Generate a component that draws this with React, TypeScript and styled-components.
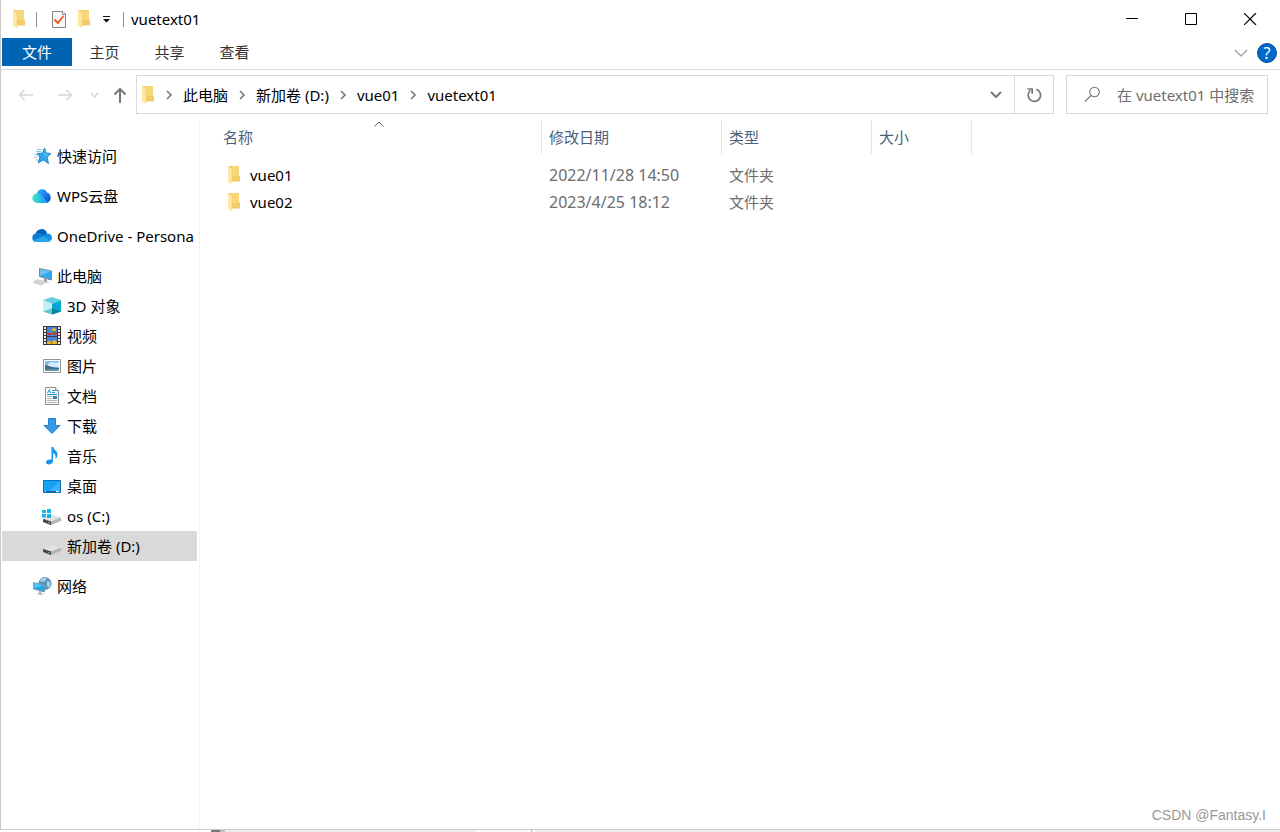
import React from 'react';
import styled, { createGlobalStyle } from 'styled-components';

const GlobalStyle = createGlobalStyle`
  * { box-sizing: border-box; }
  body {
    margin: 0;
    background: #fff;
    color: #000;
    font-family: "Noto Sans", "Noto Sans CJK SC", sans-serif;
    font-size: 15px;
    line-height: 20px;
  }
  button, input {
    margin: 0;
    padding: 0;
    border: 0;
    background: none;
    color: inherit;
    font: inherit;
  }
  svg { display: block; flex: none; }
`;

const Page = styled.div`
  display: flex;
  flex-direction: column;
  min-height: 100vh;
`;

const Window = styled.div`
  flex: 1;
  display: flex;
  flex-direction: column;
  border-left: 1px solid #c9c9c9;
  border-bottom: 1px solid #c9c9c9;
`;

const TitleBar = styled.header`
  display: flex;
  align-items: center;
  height: 38px;
  padding-left: 11px;
`;

const QuickTools = styled.div`
  display: flex;
  align-items: center;
`;

const ToolButton = styled.button<{ $width: number }>`
  display: flex;
  align-items: center;
  justify-content: center;
  width: ${p => p.$width}px;
  height: 24px;
`;

const Divider = styled.span<{ $before: number; $after: number }>`
  width: 1px;
  height: 15px;
  margin: 0 ${p => p.$after}px 0 ${p => p.$before}px;
  background: #8f8f8f;
`;

const Title = styled.h1`
  flex: 1;
  margin: 0;
  font-size: 15px;
  font-weight: 400;
`;

const WindowButton = styled.button`
  display: flex;
  align-items: center;
  justify-content: center;
  width: 59px;
  height: 38px;
`;

const Ribbon = styled.nav`
  display: flex;
  height: 32px;
  padding-left: 1px;
  border-bottom: 1px solid #dadbdc;
`;

const RibbonTab = styled.button<{ $primary?: boolean }>`
  width: ${p => (p.$primary ? 70 : 65)}px;
  height: 28px;
  background: ${p => (p.$primary ? '#0063b1' : 'transparent')};
  color: ${p => (p.$primary ? '#fff' : '#333')};
`;

const RibbonEnd = styled.div`
  display: flex;
  align-items: center;
  gap: 9px;
  height: 30px;
  margin-left: auto;
  padding-right: 3px;
`;

const HelpButton = styled.button`
  width: 20px;
  height: 20px;
  border: 1px solid #0a4f94;
  border-radius: 50%;
  background: #0067cb;
  color: #fff;
  font-size: 16px;
  line-height: 18px;
`;

const AddressRow = styled.div`
  display: flex;
  align-items: center;
  height: 49px;
  padding-right: 12px;
`;

const NavButtons = styled.div`
  display: flex;
  width: 135px;
  padding-left: 5px;
`;

const AddressBox = styled.div`
  flex: 1;
  display: flex;
  align-items: center;
  min-width: 0;
  height: 39px;
  border: 1px solid #d9d9d9;
`;

const Crumbs = styled.ol`
  flex: 1;
  display: flex;
  align-items: center;
  margin: 0;
  padding: 0;
  list-style: none;
`;

const CrumbRoot = styled.span`
  padding-left: 4px;
`;

const Crumb = styled.li`
  display: flex;
  align-items: center;
  gap: 10px;
  padding-left: 10px;
  white-space: nowrap;
`;

const PlainLink = styled.a`
  color: inherit;
  text-decoration: none;
`;

const RefreshButton = styled.button`
  display: flex;
  align-items: center;
  justify-content: center;
  width: 39px;
  height: 37px;
  border-left: 1px solid #d9d9d9;
`;

const SearchBox = styled.label`
  display: flex;
  align-items: center;
  gap: 16px;
  width: 202px;
  height: 39px;
  margin-left: 12px;
  padding-left: 17px;
  border: 1px solid #d9d9d9;
`;

const SearchInput = styled.input`
  flex: 1;
  min-width: 0;
  height: 36px;
  outline: none;
  &::placeholder { color: #6d6d6d; opacity: 1; }
`;

const Body = styled.div`
  flex: 1;
  display: flex;
  padding-top: 1px;
`;

const Sidebar = styled.aside`
  width: 199px;
  padding: 21px 2px 0 1px;
  border-right: 1px solid #f3f3f3;
`;

const SideGroup = styled.ul`
  margin: 0 0 10px;
  padding: 0;
  list-style: none;
`;

const SideLink = styled.a<{ $child?: boolean; $selected?: boolean }>`
  display: flex;
  align-items: center;
  gap: 5px;
  height: 30px;
  padding-left: ${p => (p.$child ? 40 : 30)}px;
  overflow: hidden;
  white-space: nowrap;
  color: inherit;
  text-decoration: none;
  background: ${p => (p.$selected ? '#d9d9d9' : 'transparent')};
`;

const Files = styled.main`
  flex: 1;
  padding-left: 16px;
`;

const FileTable = styled.table`
  table-layout: fixed;
  width: 756px;
  border-collapse: separate;
  border-spacing: 0;
  tbody::before { content: ''; display: block; height: 7px; }
`;

const HeadCell = styled.th<{ $width: number }>`
  position: relative;
  width: ${p => p.$width}px;
  height: 34px;
  padding: 0 0 0 7px;
  border-right: 1px solid #e5e5e5;
  color: #4c607a;
  font-weight: 400;
  text-align: left;
`;

const SortMark = styled.span`
  position: absolute;
  top: 1px;
  left: 50%;
  transform: translateX(-50%);
`;

const Cell = styled.td`
  height: 27px;
  padding: 0 0 0 7px;
  color: #6d6d6d;
`;

const DateCell = styled(Cell)`
  font-size: 16px;
`;

const FileName = styled(PlainLink)`
  display: flex;
  align-items: center;
  gap: 9px;
  padding-left: 4px;
  color: #000;
`;

const BottomStrip = styled.footer`
  display: flex;
  height: 2px;
  padding-left: 211px;
  background: #fff;
`;

const StripPart = styled.span<{ $color: string; $width?: number }>`
  flex: ${p => (p.$width ? `0 0 ${p.$width}px` : '1')};
  background: ${p => p.$color};
`;

const Watermark = styled.span`
  position: absolute;
  right: 14px;
  bottom: 7px;
  color: #999;
  font-family: "Liberation Sans", sans-serif;
  font-size: 14px;
`;

const FolderIcon = () => (
  <svg width="14" height="18" viewBox="0 0 14 18">
    <path d="M1 0h11v9l1 1v5.500H4z" fill="#f2cc69" />
    <path d="M5 0h7v10H5z" fill="#f7d67c" />
    <path d="M1 0l4 3v15l-4-2z" fill="#ffe9a2" />
    <path d="M5 2.500V17" stroke="#efc968" strokeWidth=".5" />
  </svg>
);

const CheckDocIcon = () => (
  <svg width="16" height="19" viewBox="0 0 16 19">
    <path d="M1.500 1.500h10.500l2.500 2.500v13.500h-13z" fill="#f7f8fa" stroke="#858585" />
    <path d="M11.500 1.500v3h3" fill="#fff" stroke="#858585" />
    <path d="M3.500 9.500l3.300 3.500 5.700-7" fill="none" stroke="#ee5a1c" strokeWidth="1.900" />
  </svg>
);

const CustomizeIcon = () => (
  <svg width="7" height="7" viewBox="0 0 7 7">
    <path d="M0 0h7v1H0zM0 3h7L3.500 6.500z" fill="#111" />
  </svg>
);

type ChevronProps = { size?: number; height?: number; color?: string; width?: number };

const Chevron = ({ size = 12, height = 7, color = '#777', width = 1.5 }: ChevronProps) => (
  <svg width={size} height={height} viewBox={`0 0 ${size} ${height}`} fill="none" stroke={color} strokeWidth={width}>
    <path d={`M1 1L${size / 2} ${height - 1}L${size - 1} 1`} />
  </svg>
);

const CrumbArrow = () => (
  <svg width="8" height="10" viewBox="0 0 8 10" fill="none" stroke="#777" strokeWidth="1.600">
    <path d="M2 1l4 4-4 4" />
  </svg>
);

const ArrowIcon = ({ kind }: { kind: 'back' | 'forward' | 'up' }) => (
  <svg width="16" height="18" viewBox="0 0 16 18" fill="none" stroke={kind === 'up' ? '#777' : '#d6d6d6'} strokeWidth={kind === 'up' ? 2 : 1.5}>
    {kind === 'back' && <path d="M15 9H1.500M6.500 4L1.500 9l5 5" />}
    {kind === 'forward' && <path d="M1 9h13.500M9.500 4l5 5-5 5" />}
    {kind === 'up' && <path d="M8 17V3M2.500 8.500L8 3l5.500 5.500" />}
  </svg>
);

const RefreshIcon = () => (
  <svg width="16" height="16" viewBox="0 0 16 16" fill="none" stroke="#777" strokeWidth="1.700">
    <path d="M10.300 2.300A6.200 6.200 0 1 1 4.500 3.300" />
    <path d="M1.500 2h4.700v4.700" />
  </svg>
);

const SearchIcon = () => (
  <svg width="17" height="17" viewBox="0 0 17 17" fill="none" stroke="#777" strokeWidth="1.100">
    <circle cx="10.500" cy="6" r="4.800" />
    <path d="M7 9.500L1 15.500" />
  </svg>
);

type IconName = 'star' | 'wps' | 'onedrive' | 'pc' | 'cube' | 'video' | 'picture' | 'doc' | 'download' | 'music' | 'desktop' | 'os' | 'drive' | 'network';

const Drive = () => (
  <>
    <path d="M1 13l9-3.500 9 2.500v3l-10 4-8-3z" fill="#b5b5b5" />
    <path d="M1 12.500l9-3.500 9 2.500-10 4z" fill="#e2e2e2" />
    <path d="M1 13l8 2.500V19l-8-3z" fill="#454545" />
    <path d="M6 16l2 .6v1L6 17z" fill="#56d64d" />
  </>
);

const drawings: Record<IconName, React.ReactNode> = {
  star: (
    <>
      <path d="M12.500 2l1.500 5 5 .5-4 3.600 1.500 6.400-5-3.500-5.500 3 2-6L5 7.500l5.500-.5z" fill="#2fa6ea" stroke="#1f82c4" strokeWidth=".9" />
      <path d="M5 3.500h5M4 5.500h5M2.500 8.500h3M2 11h4M3 14h3" stroke="#79bde8" strokeWidth=".9" />
      <path d="M12.300 4l1.300 4.200 3.400.3-4.500 2.500z" fill="#5cc3f6" />
    </>
  ),
  wps: (
    <>
      <defs>
        <linearGradient id="wpsLeft" x1="0" x2="1"><stop stopColor="#42e8cb" /><stop offset="1" stopColor="#1590f5" /></linearGradient>
        <linearGradient id="wpsRight" x1="0" y1="0" x2="1" y2="1"><stop stopColor="#35b4ff" /><stop offset="1" stopColor="#0842d8" /></linearGradient>
      </defs>
      <path d="M5 8a5.200 5.200 0 0 1 10-1.500A5.500 5.500 0 0 1 14.500 17H7z" fill="url(#wpsRight)" />
      <path d="M5 7.500c4-1 5 2 7.500 5 1.500 2 2.500 3 3.500 4.500H5A4.700 4.700 0 0 1 5 7.500z" fill="url(#wpsLeft)" />
    </>
  ),
  onedrive: (
    <>
      <path d="M3.500 8a6 6 0 0 1 11.500-1l-3 5z" fill="#0364b8" />
      <path d="M4 7.500c3-1 5.500 0 7.500 1.500l4-1.500a5 5 0 0 1-.5 8.500H4A4.300 4.300 0 0 1 4 7.500z" fill="#0f78d4" />
      <path d="M11 10l4.500-2.500c2.500 0 4.500 2 4.500 4.300 0 1.200-.5 2.200-1.300 3z" fill="#1490df" />
      <path d="M1 14.500l10.500-4.500 7.200 5c-.7.700-1.500 1-2.500 1H4c-1.200 0-2.300-.6-3-1.500z" fill="#28a8ea" />
    </>
  ),
  pc: (
    <>
      <path d="M7.500 2.500l12 2.500v9l-12-3.500z" fill="#35a7ee" stroke="#7b8790" />
      <path d="M8 3l11 2.300L8 9.500z" fill="#68c3f5" />
      <path d="M12 12.500l3 1v2h-3z" fill="#8c969d" />
      <path d="M9 14.500l8 1.500-1 1-8-1.500z" fill="#b8bec3" />
      <path d="M5 13.500l9 2.500-4 3-9-2.500z" fill="#e1e4e6" stroke="#b7bbbf" strokeWidth=".6" />
      <path d="M4 14.800l8.500 2.400M3 16l8 2.300" stroke="#b2b7bb" strokeWidth=".5" />
    </>
  ),
  cube: (
    <>
      <path d="M1 4l9-3 9 3-9 4z" fill="#5fd0df" />
      <path d="M1 4l9 4v10.500L1 15.500z" fill="#c2eff3" />
      <path d="M10 8l9-4v11.500l-9 3z" fill="#09a8d4" />
      <path d="M1 15.500l9-3v6z" fill="#5cc6d1" />
      <path d="M10 12.500l9 3-9 3z" fill="#08809a" />
    </>
  ),
  video: (
    <>
      <path d="M1 0h18v19H1z" fill="#383838" />
      <path d="M5 1h10v9H5zM5 11h10v7H5z" fill="#4b82df" />
      <path d="M5 7h4l1 2H5zM10 7h5v2h-4z" fill="#cf3132" />
      <path d="M10 3l2-1 2 1v3l-2 1-2-1zM5 16l2-1 2 1v2H5zM10 15l3-1 2 2v2h-5z" fill="#e2b52d" />
      <path d="M10 5h4v2h-4z" fill="#419541" />
      <path d="M3 1v18M17 1v18" stroke="#eee" strokeWidth="2" strokeDasharray="2 1" />
    </>
  ),
  picture: (
    <>
      <path d="M1.500 3.500h17v13h-17z" fill="#fff" stroke="#959595" />
      <path d="M3 5h14v10H3z" fill="#80bff0" />
      <path d="M7 7c4-2 6 1 10-1v5H5z" fill="#d8edfa" />
      <path d="M3 9c3 0 5 2.500 14 3v3H3z" fill="#3d7180" />
      <path d="M3 13.500l14-.5v2H3z" fill="#6699bb" />
    </>
  ),
  doc: (
    <>
      <path d="M3.500 1.500h10l3 3v14h-13z" fill="#fcfcfc" stroke="#8d8d8d" />
      <path d="M13.500 1.500v3h3" fill="#e5e5e5" stroke="#8d8d8d" />
      <path d="M5.500 7l2-3.500 1 3.500M10 4.500h3M10 6.500h3M5 8.500h10" fill="none" stroke="#1c91db" />
      <path d="M5 10.500h5M5 12.500h5M5 14.500h10M5 16.500h10" stroke="#b4b4b4" />
      <path d="M11 10h4v3h-4z" fill="#387db3" />
    </>
  ),
  download: <path d="M6.500 2.500h7v7H18L10 17.500 2 9.500h4.500z" fill="#3598e8" stroke="#2382cc" />,
  music: (
    <path d="M9.500 1h1.800c.5 3 4.700 4 4.200 8-.2 2-1 3-2 4 .5-4-.5-5-2.500-6v8c0 4-7 4.500-7 1.500 0-2.500 3-3.500 5.500-2.500z" fill="#1795ea" />
  ),
  desktop: (
    <>
      <path d="M1.500 4.500h17v12h-17z" fill="#18a0f5" stroke="#0873bc" />
      <path d="M18 5L7 15h11z" fill="#38b0fa" />
      <path d="M2 15.500h16" stroke="#0b63a5" />
      <path d="M3 15.500h1M14 15.500h3" stroke="#fff" />
    </>
  ),
  os: (
    <>
      <Drive />
      <path d="M0 4h4v3H0zM5 3h4v4H5zM0 8h4v3.500H0zM5 8h4v4H5z" fill="#12b5ec" />
    </>
  ),
  drive: <Drive />,
  network: (
    <>
      <circle cx="13" cy="7.500" r="6.500" fill="#5b93b8" />
      <path d="M8 5c1-3 5-4 7-3l-2 3-3 1zM15 5l3 1c1 3 0 5-2 6l-1-3z" fill="#a9d3e2" />
      <path d="M1.500 6.500l11 2.500v7l-11-3z" fill="#27a1e7" stroke="#7099b3" strokeWidth=".8" />
      <path d="M2 7l10 2.500L2 12z" fill="#57c2f6" />
      <path d="M7 14.500l2 .5v2l3 1-3 1-4-1 2-1z" fill="#a9b4bb" />
    </>
  ),
};

const SideIcon = ({ name }: { name: IconName }) => (
  <svg width="20" height="20" viewBox="0 0 20 20">{drawings[name]}</svg>
);

type Place = { icon: IconName; label: string; child?: boolean; selected?: boolean };

const groups: Place[][] = [
  [{ icon: 'star', label: '快速访问' }],
  [{ icon: 'wps', label: 'WPS云盘' }],
  [{ icon: 'onedrive', label: 'OneDrive - Persona' }],
  [
    { icon: 'pc', label: '此电脑' },
    { icon: 'cube', label: '3D 对象', child: true },
    { icon: 'video', label: '视频', child: true },
    { icon: 'picture', label: '图片', child: true },
    { icon: 'doc', label: '文档', child: true },
    { icon: 'download', label: '下载', child: true },
    { icon: 'music', label: '音乐', child: true },
    { icon: 'desktop', label: '桌面', child: true },
    { icon: 'os', label: 'os (C:)', child: true },
    { icon: 'drive', label: '新加卷 (D:)', child: true, selected: true },
  ],
  [{ icon: 'network', label: '网络' }],
];

const crumbs = ['此电脑', '新加卷 (D:)', 'vue01', 'vuetext01'];

const files = [
  { name: 'vue01', date: '2022/11/28 14:50', type: '文件夹' },
  { name: 'vue02', date: '2023/4/25 18:12', type: '文件夹' },
];

export default function App() {
  return (
    <Page>
      <GlobalStyle />
      <Window>
        <TitleBar>
          <QuickTools>
            <FolderIcon />
            <Divider $before={10} $after={10} />
            <ToolButton $width={24} aria-label="属性"><CheckDocIcon /></ToolButton>
            <ToolButton $width={26} aria-label="新建文件夹"><FolderIcon /></ToolButton>
            <ToolButton $width={18} aria-label="自定义快速访问工具栏"><CustomizeIcon /></ToolButton>
            <Divider $before={8} $after={7} />
          </QuickTools>
          <Title>vuetext01</Title>
          <WindowButton aria-label="最小化">
            <svg width="13" height="12" viewBox="0 0 13 12"><path d="M0 5h12v1H0z" fill="#000" /></svg>
          </WindowButton>
          <WindowButton aria-label="最大化">
            <svg width="13" height="12" viewBox="0 0 13 12"><path d="M.5.5h11v11H.5z" fill="none" stroke="#000" /></svg>
          </WindowButton>
          <WindowButton aria-label="关闭">
            <svg width="13" height="12" viewBox="0 0 13 12"><path d="M0 0l12 12M12 0L0 12" stroke="#000" strokeWidth="1.200" /></svg>
          </WindowButton>
        </TitleBar>

        <Ribbon>
          <RibbonTab $primary>文件</RibbonTab>
          <RibbonTab>主页</RibbonTab>
          <RibbonTab>共享</RibbonTab>
          <RibbonTab>查看</RibbonTab>
          <RibbonEnd>
            <button aria-label="展开功能区"><Chevron size={14} height={8} color="#999" width={1.2} /></button>
            <HelpButton aria-label="帮助">?</HelpButton>
          </RibbonEnd>
        </Ribbon>

        <AddressRow>
          <NavButtons>
            <ToolButton $width={39} aria-label="后退"><ArrowIcon kind="back" /></ToolButton>
            <ToolButton $width={39} aria-label="前进"><ArrowIcon kind="forward" /></ToolButton>
            <ToolButton $width={20} aria-label="最近浏览的位置"><Chevron size={9} height={6} color="#d6d6d6" /></ToolButton>
            <ToolButton $width={32} aria-label="上移"><ArrowIcon kind="up" /></ToolButton>
          </NavButtons>
          <AddressBox>
            <CrumbRoot><FolderIcon /></CrumbRoot>
            <Crumbs>
              {crumbs.map(crumb => (
                <Crumb key={crumb}>
                  <CrumbArrow />
                  <PlainLink href="#">{crumb}</PlainLink>
                </Crumb>
              ))}
            </Crumbs>
            <ToolButton $width={36} aria-label="以前的位置"><Chevron width={2} /></ToolButton>
            <RefreshButton aria-label="刷新"><RefreshIcon /></RefreshButton>
          </AddressBox>
          <SearchBox>
            <SearchIcon />
            <SearchInput type="text" aria-label="搜索" placeholder="在 vuetext01 中搜索" />
          </SearchBox>
        </AddressRow>

        <Body>
          <Sidebar>
            {groups.map(group => (
              <SideGroup key={group[0].label}>
                {group.map(place => (
                  <li key={place.label}>
                    <SideLink href="#" $child={place.child} $selected={place.selected}>
                      <SideIcon name={place.icon} />
                      {place.label}
                    </SideLink>
                  </li>
                ))}
              </SideGroup>
            ))}
          </Sidebar>
          <Files>
            <FileTable>
              <thead>
                <tr>
                  <HeadCell $width={326}>
                    名称
                    <SortMark><svg width="10" height="6" viewBox="0 0 10 6" fill="none" stroke="#666"><path d="M.5 5.500L5 1l4.500 4.500" /></svg></SortMark>
                  </HeadCell>
                  <HeadCell $width={180}>修改日期</HeadCell>
                  <HeadCell $width={150}>类型</HeadCell>
                  <HeadCell $width={100}>大小</HeadCell>
                </tr>
              </thead>
              <tbody>
                {files.map(file => (
                  <tr key={file.name}>
                    <Cell><FileName href="#"><FolderIcon />{file.name}</FileName></Cell>
                    <DateCell>{file.date}</DateCell>
                    <Cell>{file.type}</Cell>
                    <Cell />
                  </tr>
                ))}
              </tbody>
            </FileTable>
          </Files>
        </Body>
      </Window>
      <BottomStrip>
        <StripPart $color="#77797a" $width={9} />
        <StripPart $color="#c2c3b8" $width={5} />
        <StripPart $color="#ededed" $width={250} />
        <StripPart $color="#fafafa" $width={56} />
        <StripPart $color="#b5b5b5" $width={1} />
        <StripPart $color="#fafafa" $width={4} />
        <StripPart $color="#ededed" />
      </BottomStrip>
      <Watermark>CSDN @Fantasy.I</Watermark>
    </Page>
  );
}
